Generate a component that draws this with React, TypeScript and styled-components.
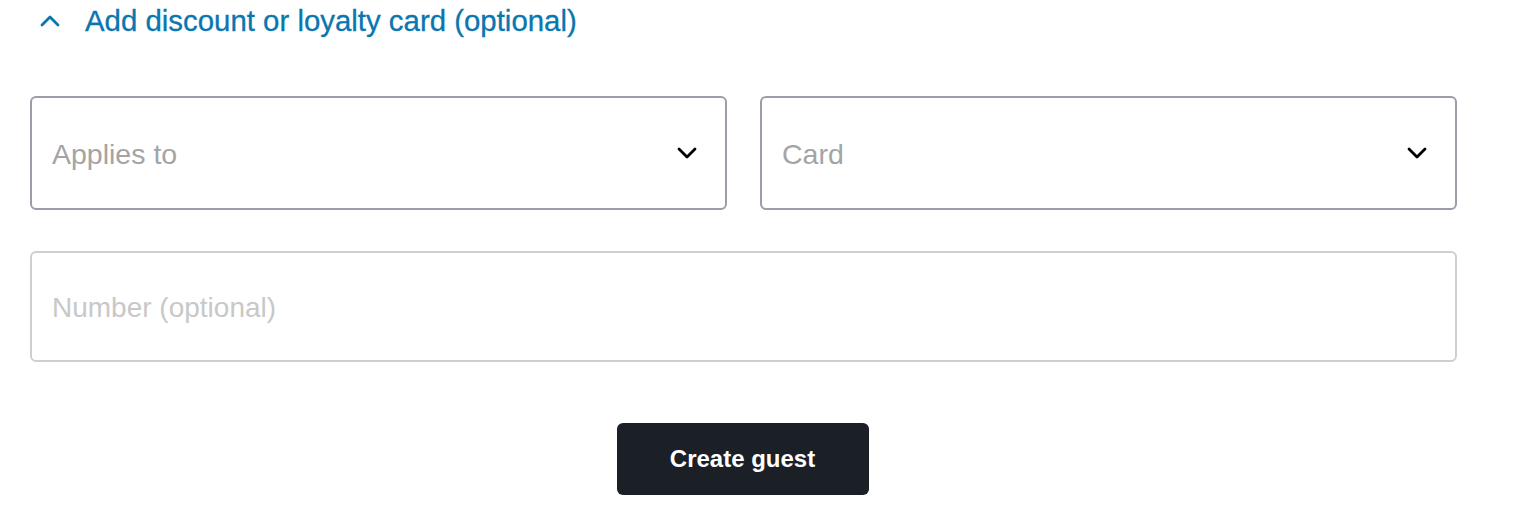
import styled, { createGlobalStyle } from 'styled-components';

const GlobalStyle = createGlobalStyle`
  body {
    margin: 0;
    background: #ffffff;
    font-family: "Liberation Sans", Arial, sans-serif;
  }
`;

const Page = styled.div`
  width: 1427px;
  padding: 0 0 0 30px;
  display: flex;
  flex-direction: column;
`;

const Toggle = styled.button`
  display: flex;
  align-items: center;
  gap: 25px;
  height: 42px;
  padding: 0 0 0 10px;
  border: none;
  background: none;
  color: #0a76b0;
  font-family: inherit;
  font-size: 29.4px;
  cursor: pointer;
  align-self: flex-start;
  -webkit-text-stroke: 0.3px #0a76b0;
`;

const Fields = styled.div`
  margin-top: 54px;
  display: grid;
  grid-template-columns: 1fr 1fr;
  column-gap: 33px;
  row-gap: 41px;
`;

const Select = styled.div`
  height: 114px;
  box-sizing: border-box;
  border: 2px solid #9a9ea6;
  border-radius: 6px;
  display: flex;
  align-items: center;
  justify-content: space-between;
  padding: 3px 28px 0 20px;
  font-size: 28.5px;
  color: #a4a4a4;

  svg {
    margin-top: -3px;
  }
`;

const TextField = styled.div`
  grid-column: 1 / -1;
  height: 111px;
  box-sizing: border-box;
  border: 2px solid #cfcfcf;
  border-radius: 6px;
  display: flex;
  align-items: center;
  padding: 2px 20px 0;
  font-size: 28px;
  color: #c8c8c8;
`;

const Actions = styled.div`
  display: flex;
  justify-content: center;
  margin-top: 61px;
`;

const PrimaryButton = styled.button`
  width: 252px;
  height: 72px;
  border: none;
  border-radius: 6px;
  background: #1b2027;
  color: #ffffff;
  font-family: inherit;
  font-weight: 700;
  font-size: 24px;
  cursor: pointer;
  margin-left: -2px;
`;

const Chevron = ({ up = false, color }: { up?: boolean; color: string }) => (
  <svg width="20" height="12" viewBox="0 0 20 12" style={{ transform: up ? 'rotate(180deg)' : undefined }}>
    <path d="M2 2 L10 10 L18 2" fill="none" stroke={color} strokeWidth="2.8" strokeLinecap="round" strokeLinejoin="round" />
  </svg>
);

export default function App() {
  return (
    <>
      <GlobalStyle />
      <Page>
        <Toggle>
          <Chevron up color="#0a76b0" />
          Add discount or loyalty card (optional)
        </Toggle>
        <Fields>
          <Select>
            Applies to
            <Chevron color="#000000" />
          </Select>
          <Select>
            Card
            <Chevron color="#000000" />
          </Select>
          <TextField>Number (optional)</TextField>
        </Fields>
        <Actions>
          <PrimaryButton>Create guest</PrimaryButton>
        </Actions>
      </Page>
    </>
  );
}
